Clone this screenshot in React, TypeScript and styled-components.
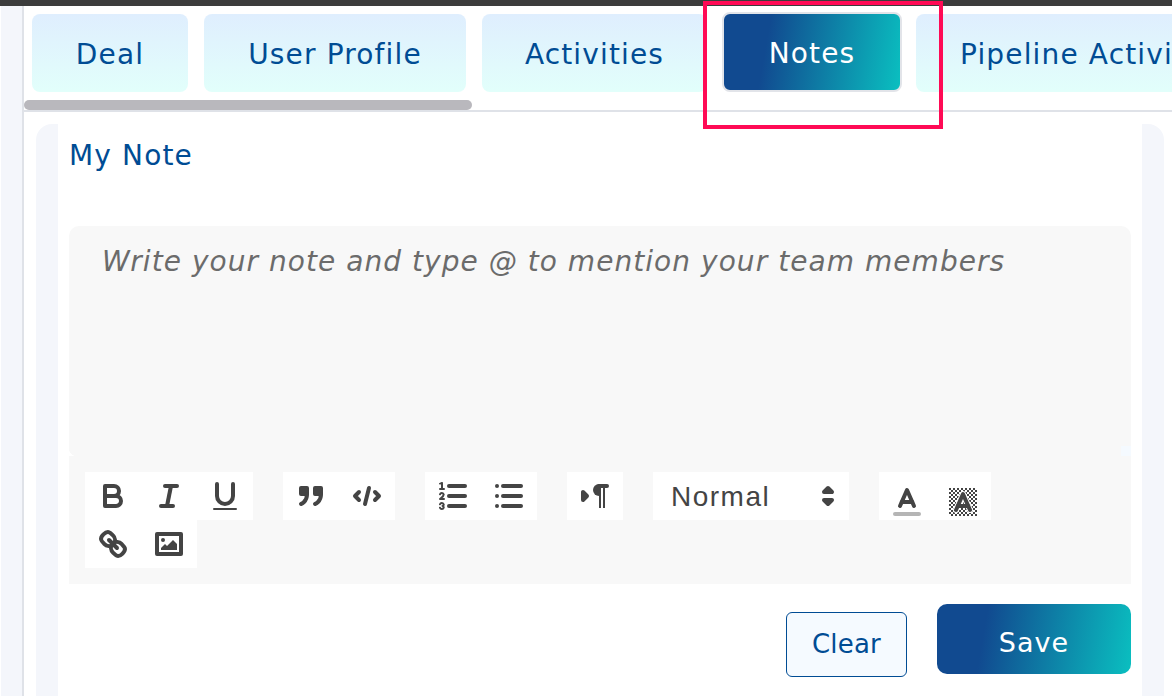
import * as React from "react"
import styled, { createGlobalStyle } from "styled-components"

const GlobalStyle = createGlobalStyle`
html, body {
    margin: 0;
    padding: 0;
    background: #fff;
}
* {
    box-sizing: border-box;
}
`

const Page = styled("div")`
position: relative;
width: 1172px;
height: 696px;
overflow: hidden;
font-family: "DejaVu Sans", "Liberation Sans", sans-serif;
`

const TopBar = styled("div")`
height: 6px;
background: #3c3c3c;
`

const Layout = styled("div")`
display: flex;
height: 690px;
`

const SideStrip = styled("div")`
width: 24px;
flex-shrink: 0;
background: #f4f6fb;
border-left: 1px solid #fff;
border-right: 2px solid #dfe2e8;
`

const Main = styled("main")`
flex-grow: 1;
min-width: 0;
`

const TabArea = styled("div")`
height: 106px;
border-bottom: 2px solid #dfe2e8;
overflow: hidden;
`

const TabRow = styled("nav")`
display: flex;
align-items: flex-end;
gap: 16px;
height: 86px;
padding-left: 8px;
`

const Tab = styled("div")<{ $width?: number; $active?: boolean }>`
display: flex;
align-items: center;
justify-content: center;
flex-shrink: 0;
width: ${p => (p.$width ? `${p.$width}px` : "auto")};
height: ${p => (p.$active ? 80 : 78)}px;
padding: 3px 44px 0;
margin: ${p => (p.$active ? "0 -2px 0 -1px" : "0")};
border-radius: 8px;
border: ${p => (p.$active ? "2px solid #e2e4e9" : "none")};
background: ${p => (p.$active ? "linear-gradient(100deg, #114a90 25%, #0abfc0 100%)" : "linear-gradient(180deg, #dfeefe, #e2fffb)")};
color: ${p => (p.$active ? "#fff" : "#004c94")};
font-size: 28px;
letter-spacing: 1.15px;
white-space: nowrap;
`

const Thumb = styled("div")`
width: 448px;
height: 10px;
margin-top: 8px;
border-radius: 5px;
background: #b9b8bd;
`

const Panel = styled("section")`
height: 572px;
margin: 12px 8px 0 12px;
padding: 0 22px;
border-radius: 16px 16px 0 0;
background: #f4f6fb;
`

const PanelInner = styled("div")`
height: 100%;
padding: 0 11px;
background: #fff;
`

const Title = styled("h2")`
margin: 0;
height: 102px;
padding: 14px 0 0;
color: #004c94;
font-size: 28px;
line-height: 36px;
font-weight: 400;
letter-spacing: 1.15px;
`

const Editor = styled("div")`
border-radius: 10px 10px 0 0;
background: #f8f8f8;
`

const Placeholder = styled("div")`
position: relative;
height: 230px;
padding: 17px 33px;
color: #6b6b6b;
font-size: 28px;
line-height: 38px;
font-style: italic;
letter-spacing: 1.05px;
white-space: nowrap;

&:before {
    content: "";
    position: absolute;
    left: 0;
    bottom: 0;
    width: 8px;
    height: 8px;
    background: radial-gradient(circle at 100% 0, #f8f8f8 8px, #fff 8.5px);
}

&:after {
    content: "";
    position: absolute;
    right: 0;
    bottom: 0;
    width: 10px;
    height: 10px;
    background: #f5faff;
}
`

const Toolbar = styled("div")`
display: flex;
flex-wrap: wrap;
height: 128px;
padding: 16px;
`

const Group = styled("div")`
display: flex;
flex-wrap: wrap;
margin-right: 30px;
background: #fff;
`

const WrappedGroup = styled(Group)`
width: 112px;
`

const ToolButton = styled("button")<{ $picker?: boolean }>`
width: 56px;
height: 48px;
padding: ${p => (p.$picker ? "12px 10px 0" : "6px 10px")};
border: none;
background: transparent;

svg {
    display: block;
    width: 36px;
    height: 36px;
    fill: none;
    stroke: #444;
    stroke-width: 2;
    stroke-linecap: round;
    stroke-linejoin: round;
}

.fill {
    fill: #444;
    stroke: none;
}

.thin {
    stroke-width: 1;
}
`

const Select = styled("div")`
display: flex;
align-items: center;
justify-content: space-between;
width: 196px;
height: 48px;
padding: 2px 3px 0 18px;
color: #444;
font-family: "Liberation Sans", Arial, sans-serif;
font-size: 28px;
letter-spacing: 1.5px;

svg {
    width: 36px;
    height: 36px;
    margin-top: -2px;
    fill: #444;
    stroke: #444;
    stroke-width: 2;
    stroke-linejoin: round;
}
`

const Actions = styled("div")`
display: flex;
justify-content: flex-end;
gap: 30px;
margin-top: 20px;
`

const ClearButton = styled("button")`
width: 121px;
height: 65px;
margin-top: 8px;
padding: 0 0 2px;
border: 1px solid #004c94;
border-radius: 6px;
background: #f5faff;
color: #004c94;
font: 400 26px "DejaVu Sans", sans-serif;
letter-spacing: 0.2px;
`

const SaveButton = styled("button")`
width: 194px;
height: 70px;
padding: 6px 0 0;
border: none;
border-radius: 10px;
background: linear-gradient(100deg, #114a90 25%, #0abfc0 100%);
color: #fff;
font: 400 27px "DejaVu Sans", sans-serif;
letter-spacing: 1px;
`

const Highlight = styled("div")`
position: absolute;
left: 703px;
top: 1px;
width: 240px;
height: 128px;
border: 4px solid #ff0a55;
pointer-events: none;
`

const App: React.FunctionComponent = () => {
    return <Page>
        <GlobalStyle />
        <TopBar />
        <Layout>
            <SideStrip />
            <Main>
                <TabArea>
                    <TabRow>
                        <Tab $width={156}>Deal</Tab>
                        <Tab $width={262}>User Profile</Tab>
                        <Tab $width={225}>Activities</Tab>
                        <Tab $width={180} $active>Notes</Tab>
                        <Tab>Pipeline Activities</Tab>
                    </TabRow>
                    <Thumb />
                </TabArea>
                <Panel>
                    <PanelInner>
                        <Title>My Note</Title>
                        <Editor>
                            <Placeholder>Write your note and type @ to mention your team members</Placeholder>
                            <Toolbar>
                                <Group>
                                    <ToolButton aria-label="bold"><svg viewBox="0 0 18 18"><path d="M5,4H9.5A2.5,2.5,0,0,1,12,6.5v0A2.5,2.5,0,0,1,9.5,9H5V4Z" /><path d="M5,9h5.5A2.5,2.5,0,0,1,13,11.5v0A2.5,2.5,0,0,1,10.5,14H5V9Z" /></svg></ToolButton>
                                    <ToolButton aria-label="italic"><svg viewBox="0 0 18 18"><line x1="7" x2="13" y1="4" y2="4" /><line x1="5" x2="11" y1="14" y2="14" /><line x1="8" x2="10" y1="14" y2="4" /></svg></ToolButton>
                                    <ToolButton aria-label="underline"><svg viewBox="0 0 18 18"><path d="M5,3V9a4,4,0,0,0,4,4H9a4,4,0,0,0,4-4V3" /><rect className="fill" height="1" rx="0.5" ry="0.5" width="12" x="3" y="15" /></svg></ToolButton>
                                </Group>
                                <Group>
                                    <ToolButton aria-label="blockquote"><svg viewBox="0 0 18 18"><rect className="fill" height="3" width="3" x="4" y="5" /><rect className="fill" height="3" width="3" x="11" y="5" /><rect height="3" width="3" x="4" y="5" /><rect height="3" width="3" x="11" y="5" /><path d="M7,8c0,4.031-3,5-3,5" /><path d="M14,8c0,4.031-3,5-3,5" /></svg></ToolButton>
                                    <ToolButton aria-label="code"><svg viewBox="0 0 18 18"><polyline points="5 7 3 9 5 11" /><polyline points="13 7 15 9 13 11" /><line x1="10" x2="8" y1="5" y2="13" /></svg></ToolButton>
                                </Group>
                                <Group>
                                    <ToolButton aria-label="ordered list"><svg viewBox="0 0 18 18"><line x1="7" x2="15" y1="4" y2="4" /><line x1="7" x2="15" y1="9" y2="9" /><line x1="7" x2="15" y1="14" y2="14" /><line className="thin" x1="2.5" x2="4.5" y1="5.5" y2="5.5" /><path className="fill" d="M3.5,6A0.5,0.5,0,0,1,3,5.5V3.085l-0.276.138A0.5,0.5,0,0,1,2.053,3c-0.124-.247-0.023-0.324.224-0.447l1-.5A0.5,0.5,0,0,1,4,2.5v3A0.5,0.5,0,0,1,3.5,6Z" /><path className="thin" d="M4.5,10.5h-2c0-.234,1.85-1.076,1.85-2.234A0.959,0.959,0,0,0,2.5,8.156" /><path className="thin" d="M2.5,14.846a0.959,0.959,0,0,0,1.85-.109A0.7,0.7,0,0,0,3.75,14a0.688,0.688,0,0,0,.6-0.736,0.959,0.959,0,0,0-1.85-.109" /></svg></ToolButton>
                                    <ToolButton aria-label="bullet list"><svg viewBox="0 0 18 18"><line x1="6" x2="15" y1="4" y2="4" /><line x1="6" x2="15" y1="9" y2="9" /><line x1="6" x2="15" y1="14" y2="14" /><line x1="3" x2="3" y1="4" y2="4" /><line x1="3" x2="3" y1="9" y2="9" /><line x1="3" x2="3" y1="14" y2="14" /></svg></ToolButton>
                                </Group>
                                <Group>
                                    <ToolButton aria-label="direction"><svg viewBox="0 0 18 18"><polygon points="3 11 5 9 3 7 3 11" fill="#444" /><line x1="15" x2="11" y1="4" y2="4" /><path className="fill" d="M11,3a3,3,0,0,0,0,6h1V3H11Z" /><rect className="fill" height="11" width="1" x="11" y="4" /><rect className="fill" height="11" width="1" x="13" y="4" /></svg></ToolButton>
                                </Group>
                                <Group>
                                    <Select>
                                        Normal
                                        <svg viewBox="0 0 18 18"><polygon points="7 11 9 13 11 11 7 11" /><polygon points="7 7 9 5 11 7 7 7" /></svg>
                                    </Select>
                                </Group>
                                <Group>
                                    <ToolButton $picker aria-label="color"><svg viewBox="0 0 18 18"><line x1="3" x2="15" y1="15" y2="15" stroke="#b5b5b5" /><polyline points="5.5 11 9 3 12.5 11" /><line x1="11.63" x2="6.38" y1="9" y2="9" /></svg></ToolButton>
                                    <ToolButton $picker aria-label="background"><svg viewBox="0 0 18 18"><defs><pattern id="checker" width="2" height="2" patternUnits="userSpaceOnUse"><rect className="fill" width="1" height="1" /><rect className="fill" x="1" y="1" width="1" height="1" /></pattern></defs><rect x="2" y="2" width="14" height="14" fill="url(#checker)" stroke="none" /><polyline points="5.5 13 9 5 12.5 13" stroke="#fff" strokeWidth="3" /><polyline points="5.5 13 9 5 12.5 13" /><line x1="11.63" x2="6.38" y1="11" y2="11" /></svg></ToolButton>
                                </Group>
                                <WrappedGroup>
                                    <ToolButton aria-label="link"><svg viewBox="0 0 18 18"><line x1="7" x2="11" y1="7" y2="11" /><path d="M8.9,4.577a3.476,3.476,0,0,1,.36,4.679A3.476,3.476,0,0,1,4.577,8.9C3.185,7.5,2.035,6.4,4.217,4.217S7.5,3.185,8.9,4.577Z" /><path d="M13.423,9.1a3.476,3.476,0,0,0-4.679-.36,3.476,3.476,0,0,0,.36,4.679c1.392,1.392,2.5,2.542,4.679.36S14.815,10.5,13.423,9.1Z" /></svg></ToolButton>
                                    <ToolButton aria-label="image"><svg viewBox="0 0 18 18"><rect height="10" width="12" x="3" y="4" /><circle className="fill" cx="6" cy="7" r="1" /><polyline className="fill" points="5 12 5 11 7 9 8 10 11 7 13 9 13 12 5 12" /></svg></ToolButton>
                                </WrappedGroup>
                            </Toolbar>
                        </Editor>
                        <Actions>
                            <ClearButton>Clear</ClearButton>
                            <SaveButton>Save</SaveButton>
                        </Actions>
                    </PanelInner>
                </Panel>
            </Main>
        </Layout>
        <Highlight />
    </Page>
}

export default App
